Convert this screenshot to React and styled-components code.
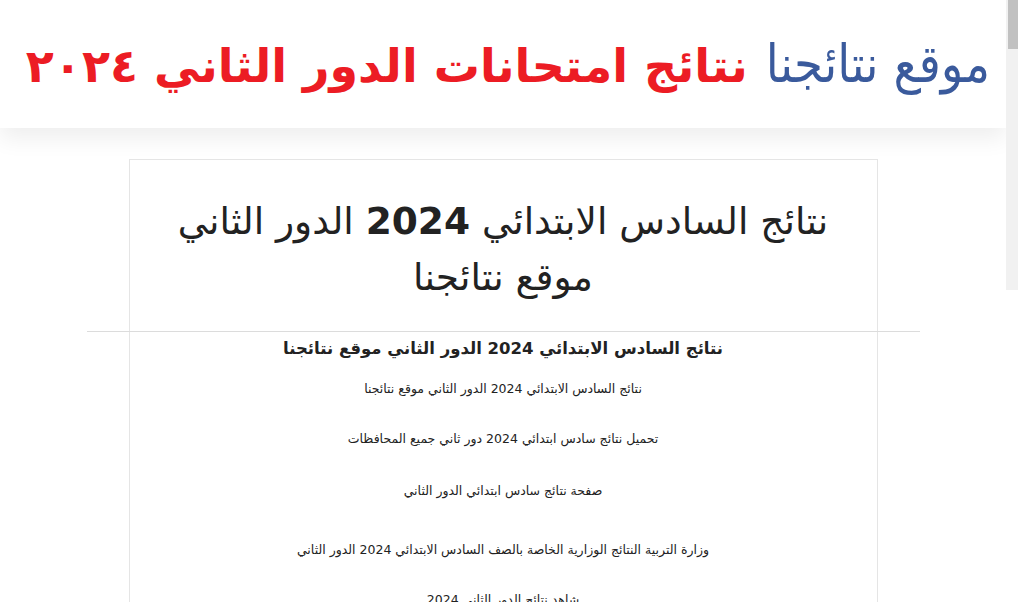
import React from 'react';
import styled, {createGlobalStyle} from 'styled-components';

const Global = createGlobalStyle`
  html, body {
    margin: 0;
    padding: 0;
    background: #fff;
    overflow: hidden;
  }
  body {
    font-family: "DejaVu Sans", "Noto Sans", sans-serif;
    color: #222;
  }
`;

const Page = styled.div`
  width: 1006px;
  height: 602px;
  overflow: hidden;
`;

const Header = styled.header`
  direction: rtl;
  height: 128px;
  display: flex;
  align-items: center;
  padding: 0 16px;
  background: #fff;
  box-shadow: 0 10px 22px rgba(0, 0, 0, 0.07);
`;

const Logo = styled.h1`
  margin: 0;
  font-size: 52px;
  font-weight: normal;
  white-space: nowrap;
  color: #3a5a9c;
  font-family: "DejaVu Sans Condensed", "DejaVu Sans", sans-serif;
`;

const LogoRed = styled.span`
  color: #ec1c24;
  font-size: 46px;
  font-weight: bold;
  margin-right: 18px;
  font-family: "DejaVu Sans", sans-serif;
`;

const Card = styled.article`
  direction: rtl;
  width: 749px;
  box-sizing: border-box;
  margin: 31px auto 0;
  border: 1px solid #e5e5e5;
  border-bottom: none;
  text-align: center;
`;

const Title = styled.h1`
  margin: 0;
  padding: 33px 30px 26px;
  font-size: 37.5px;
  line-height: 56px;
  font-weight: normal;
  color: #222;
`;

const Rule = styled.hr`
  margin: 0 -43px;
  border: none;
  border-top: 1px solid #dcdcdc;
`;

const Sub = styled.h2`
  margin: 5px 0 18px;
  font-size: 16.5px;
  line-height: 24px;
  font-weight: bold;
  color: #222;
`;

const Para = styled.p`
  margin: 0 0 ${p => p.gap || 32}px;
  font-size: 12.5px;
  line-height: 20px;
  color: #222;
`;

const Scrollbar = styled.div`
  position: fixed;
  top: 0;
  right: 0;
  width: 12px;
  height: 290px;
  background: #f1f1f1;
`;

const Thumb = styled.div`
  margin-left: 2px;
  height: 49px;
  background: #c1c1c1;
`;

const paras = [
  ['نتائج السادس الابتدائي 2024 الدور الثاني موقع نتائجنا', 30],
  ['تحميل نتائج سادس ابتدائي 2024 دور ثاني جميع المحافظات', 32],
  ['صفحة نتائج سادس ابتدائي الدور الثاني', 39],
  ['وزارة التربية النتائج الوزارية الخاصة بالصف السادس الابتدائي 2024 الدور الثاني', 30],
  ['شاهد نتائج الدور الثاني 2024', 30],
];

export default function App() {
  return (
    <Page>
      <Global />
      <Header>
        <Logo>
          موقع نتائجنا
          <LogoRed>نتائج امتحانات الدور الثاني ٢٠٢٤</LogoRed>
        </Logo>
      </Header>
      <Card>
        <Title>
          نتائج السادس الابتدائي <b>2024</b> الدور الثاني موقع نتائجنا
        </Title>
        <Rule />
        <Sub>نتائج السادس الابتدائي 2024 الدور الثاني موقع نتائجنا</Sub>
        {paras.map(([text, gap], i) => (
          <Para key={i} gap={gap}>{text}</Para>
        ))}
      </Card>
      <Scrollbar>
        <Thumb />
      </Scrollbar>
    </Page>
  );
}
